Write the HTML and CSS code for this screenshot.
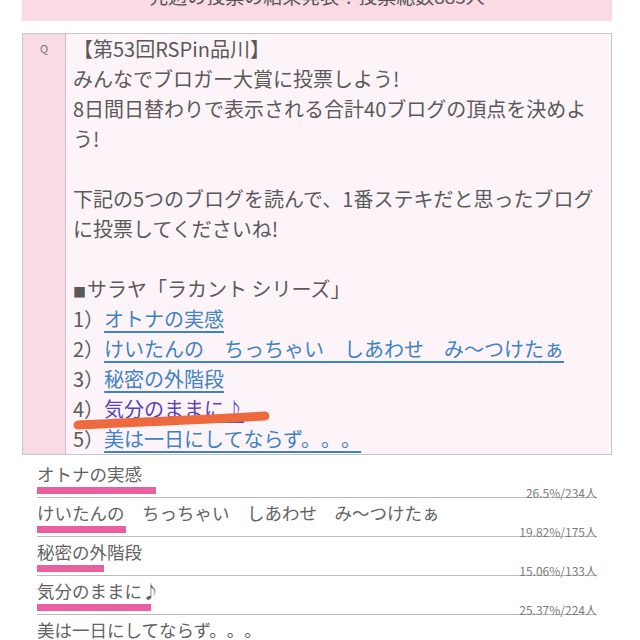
FILE: index.html
```html
<!DOCTYPE html>
<html lang="ja">
<head>
    <meta charset="UTF-8">
    <meta name="viewport" content="width=device-width, initial-scale=1.0">
    <title>ブロガー大賞 投票</title>
    <link rel="stylesheet" href="styles.css">
</head>
<body>

    <div class="page">
        <div class="banner">
            <p>先週の投票の結果発表！投票総数883人</p>
        </div>

        <div class="qbox">
            <div class="qmark">Q</div>
            <div class="qbody">
                <p>【第53回RSPin品川】<br>みんなでブロガー大賞に投票しよう!<br>8日間日替わりで表示される合計40ブログの頂点を決めよ<br>う!</p>
                <p>下記の5つのブログを読んで、1番ステキだと思ったブログ<br>に投票してくださいね!</p>
                <p>
                    <span class="square">■</span>サラヤ「ラカント シリーズ」<br>
                    1）<a href="#">オトナの実感</a><br>
                    2）<a href="#">けいたんの　ちっちゃい　しあわせ　み〜つけたぁ</a><br>
                    3）<a href="#">秘密の外階段</a><br>
                    4）<a href="#" class="visited">気分のままに♪</a><br>
                    5）<a href="#">美は一日にしてならず。。。</a>
                </p>
                <!-- 手書きのマーカー線 -->
                <svg class="marker" width="210" height="30" viewBox="0 0 210 30">
                    <path d="M8 20 C 50 18, 130 15, 195 11" fill="none" stroke="#ec6a3e" stroke-width="9" stroke-linecap="round"/>
                </svg>
            </div>
        </div>

        <ul class="results">
            <li>
                <div class="title">オトナの実感</div>
                <div class="bar-row">
                    <div class="track"><div class="bar" style="width: 26.5%"></div></div>
                    <span class="count">26.5%/234人</span>
                </div>
            </li>
            <li>
                <div class="title">けいたんの　ちっちゃい　しあわせ　み〜つけたぁ</div>
                <div class="bar-row">
                    <div class="track"><div class="bar" style="width: 19.82%"></div></div>
                    <span class="count">19.82%/175人</span>
                </div>
            </li>
            <li>
                <div class="title">秘密の外階段</div>
                <div class="bar-row">
                    <div class="track"><div class="bar" style="width: 15.06%"></div></div>
                    <span class="count">15.06%/133人</span>
                </div>
            </li>
            <li>
                <div class="title">気分のままに♪</div>
                <div class="bar-row">
                    <div class="track"><div class="bar" style="width: 25.37%"></div></div>
                    <span class="count">25.37%/224人</span>
                </div>
            </li>
            <li>
                <div class="title">美は一日にしてならず。。。</div>
                <div class="bar-row">
                    <div class="track"><div class="bar" style="width: 13.25%"></div></div>
                    <span class="count">13.25%/117人</span>
                </div>
            </li>
        </ul>
    </div>

</body>
</html>
```

FILE: styles.css
```css
body {
    margin: 0;
    background: #ffffff;
    font-family: "Noto Sans CJK JP", "Noto Sans", sans-serif;
    color: #5a5a5a;
    text-spacing-trim: space-all;
}
.page {
    width: 590px;
    margin-left: 22px;
}
.banner {
    height: 21px;
    background: #fadbe4;
    overflow: hidden;
}
.banner p {
    margin: -17px 0 0;
    text-align: center;
    font-size: 19px;
    line-height: 26px;
    color: #555;
}
.qbox {
    margin-top: 12px;
    display: flex;
    border: 1px solid #c9c6c8;
    background: #fdf4f9;
}
.qmark {
    width: 42px;
    flex-shrink: 0;
    background: #f8dbe5;
    border-right: 1px solid #cbbac3;
    text-align: center;
    font-size: 11px;
    line-height: 28px;
    color: #777;
}
.qbody {
    position: relative;
    flex: 1;
    padding-left: 7px;
    font-size: 20px;
    line-height: 30px;
    white-space: nowrap;
}
.qbody p {
    margin: 0 0 30px;
}
.qbody p:last-of-type {
    margin-bottom: 0;
}
.square {
    font-size: 13px;
    line-height: 1;
    margin-right: 1px;
}
.qbody a {
    color: #3f83c4;
    text-decoration: underline;
    text-underline-offset: 4px;
}
.qbody a.visited {
    color: #5744b4;
}
.marker {
    position: absolute;
    left: 4px;
    top: 371px;
}
.results {
    list-style: none;
    margin: 4px 15px 0;
    padding: 0;
}
.results li {
    padding-top: 5px;
    border-bottom: 1px solid #bcbcbc;
}
.title {
    font-size: 17.5px;
    line-height: 20px;
    color: #636363;
    white-space: nowrap;
}
.bar-row {
    display: flex;
    align-items: center;
    height: 13px;
}
.track {
    width: 80%;
}
.bar {
    height: 7px;
    background: #e95f9f;
}
.count {
    margin-left: auto;
    font-size: 12px;
    line-height: 13px;
    color: #7c7c7c;
    padding-top: 3px;
}
```
